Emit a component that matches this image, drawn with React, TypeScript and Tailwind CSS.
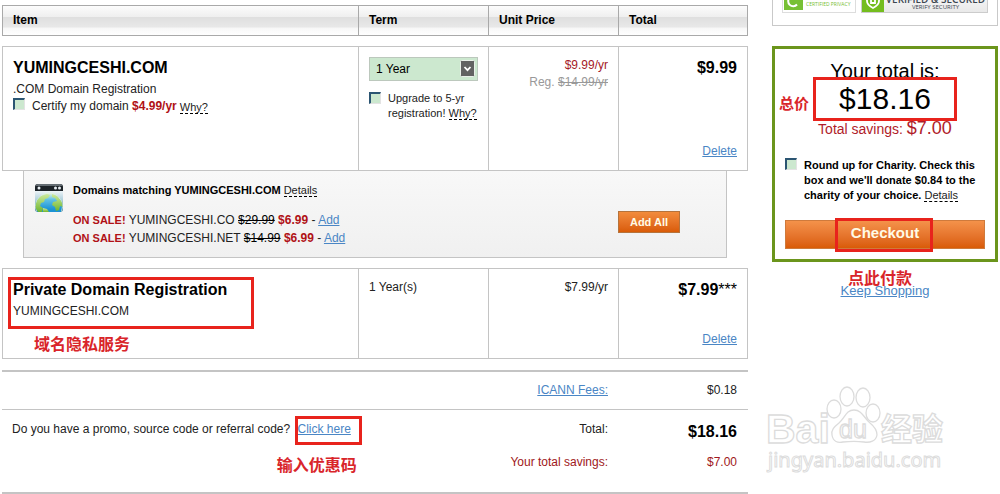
import type { ReactNode } from 'react';

const link = 'text-[#4a86c5] underline';
const hint = 'border-b border-dashed border-black text-[11px] leading-[12px] text-[#222]';
const check =
  'm-0 block size-3 shrink-0 appearance-none border-t-2 border-l-2 border-r border-b border-t-[#2b5572] border-l-[#2b5572] border-r-[#e3e3e3] border-b-[#e3e3e3] bg-[#cce8cf] checked:bg-[#4f9a58]';
const note =
  "absolute whitespace-nowrap font-['Liberation_Serif','Noto_Sans_CJK_SC',serif] font-bold leading-4 text-[#d9252a]";
const frame = 'pointer-events-none absolute border-[3px] border-[#e8231c]';
const cell = 'border-y border-l border-[#c4c4c4] px-[10px] pt-[10px] align-top';

function Heading({ children }: { children: ReactNode }) {
  return (
    <th
      scope="col"
      className="h-[31px] border-y border-l border-[#a9a9a9] px-[10px] text-left font-bold text-black last:border-r"
    >
      {children}
    </th>
  );
}

function Gap({ className }: { className: string }) {
  return (
    <tr aria-hidden="true">
      <td colSpan={4} className={className} />
    </tr>
  );
}

function GlobeIcon() {
  return (
    <svg viewBox="0 0 28 28" className="mt-px size-7 shrink-0" aria-hidden="true">
      <defs>
        <linearGradient id="sky" x1="0" y1="0" x2="0" y2="1">
          <stop offset="0.2" stopColor="#f7fafc" />
          <stop offset="0.6" stopColor="#a9cbd8" />
          <stop offset="1" stopColor="#2f618a" />
        </linearGradient>
        <linearGradient id="sea" x1="0" y1="0" x2="0" y2="1">
          <stop offset="0" stopColor="#e9f6e0" />
          <stop offset="0.25" stopColor="#5fc0e4" />
          <stop offset="0.6" stopColor="#1c93d4" />
        </linearGradient>
        <linearGradient id="land" x1="0" y1="0" x2="0" y2="1">
          <stop offset="0" stopColor="#cdea9c" />
          <stop offset="1" stopColor="#6fb52f" />
        </linearGradient>
        <clipPath id="tile">
          <rect width="28" height="28" rx="3" />
        </clipPath>
        <clipPath id="ball">
          <circle cx="14" cy="22.500" r="13.500" />
        </clipPath>
      </defs>
      <g clipPath="url(#tile)">
        <rect width="28" height="28" fill="url(#sky)" />
        <rect width="28" height="7" fill="#1d2328" />
        <rect width="28" height="2" fill="#646c72" />
        <circle cx="4" cy="4" r="1.500" fill="#e8eef2" />
        <circle cx="20.500" cy="4" r="1.500" fill="#e8eef2" />
        <circle cx="24.500" cy="4" r="1.500" fill="#e8eef2" />
        <circle cx="14" cy="22.500" r="13.500" fill="url(#sea)" stroke="#e3f2dc" strokeWidth="0.800" />
        <g clipPath="url(#ball)" fill="url(#land)">
          <path d="M0 23 2 16l4-4 6-2 3 1-2 3-3 1-1 3-3 1-1 3 3 2-1 4-4 0z" />
          <path d="m17 10 5 2 5 6 1 5-3-1-1 4-3 1-1-4-3-2 1-3 4-1-2-3-3-1z" />
          <path d="m8 24 4 1 2 3-6 0z" />
        </g>
      </g>
    </svg>
  );
}

const deals = [
  { name: 'YUMINGCESHI.CO', was: '$29.99' },
  { name: 'YUMINGCESHI.NET', was: '$14.99' },
];

function Matching() {
  return (
    <div className="mx-[21px] flex h-[87px] items-start border-x border-b border-[#c4c4c4] bg-linear-to-b from-[#f8f8f8] to-[#f0f0f0] pt-3 pr-[46px] pl-[11px]">
      <GlobeIcon />
      <div className="ml-[10px] flex-1">
        <div className="mb-[14px] text-[11px] leading-[14px]">
          <b className="text-black">Domains matching YUMINGCESHI.COM</b>{' '}
          <a href="#details" className={hint}>Details</a>
        </div>
        {deals.map((d) => (
          <div key={d.name} className="leading-[18px]">
            <b className="text-[11px] text-[#b01116]">ON SALE!</b> {d.name} <s className="text-black">{d.was}</s>{' '}
            <b className="text-[#b01116]">$6.99</b> - <a href="#add" className={link}>Add</a>
          </div>
        ))}
      </div>
      <button
        type="button"
        className="mt-7 h-[22px] w-[62px] border border-[#b5733c] bg-linear-to-b from-[#f28c3c] to-[#d95b05] text-[11px] font-bold text-[#fffbe6]"
      >
        Add All
      </button>
    </div>
  );
}

function Cart() {
  return (
    <table className="w-full table-fixed border-separate border-spacing-0">
      <colgroup>
        <col />
        <col className="w-[130px]" />
        <col className="w-[130px]" />
        <col className="w-[130px]" />
      </colgroup>
      <thead>
        <tr className="bg-[linear-gradient(to_bottom,#fdfdfd_0%,#efefef_38%,#dfdfdf_40%,#e8e8e8_70%,#f8f8f8_76%,#ffffff_100%)]">
          <Heading>Item</Heading>
          <Heading>Term</Heading>
          <Heading>Unit Price</Heading>
          <Heading>Total</Heading>
        </tr>
      </thead>
      <tbody>
        <Gap className="h-[10px]" />
        <tr className="h-[125px]">
          <td className={cell}>
            <h2 className="mb-[2px] text-base leading-[22px] font-bold text-black">YUMINGCESHI.COM</h2>
            <div>.COM Domain Registration</div>
            <div className="flex items-start">
              <input id="certify" type="checkbox" className={check} />
              <label htmlFor="certify" className="mr-[3px] ml-[7px]">
                Certify my domain <b className="text-[#b01116]">$4.99/yr</b>
              </label>
              <a href="#why-certify" className={`${hint} mt-[3px]`}>Why?</a>
            </div>
          </td>
          <td className={cell}>
            <div className="relative">
              <select
                aria-label="Term"
                className="block h-6 w-full appearance-none rounded-none border border-[#bcc8bd] bg-[#cce8cf] pr-5 pl-[6px] text-[12px] text-black"
              >
                <option>1 Year</option>
                <option>2 Years</option>
                <option>5 Years</option>
              </select>
              <svg viewBox="0 0 15 17" className="pointer-events-none absolute top-[3px] right-[3px] h-[17px] w-[15px]" aria-hidden="true">
                <rect x="0.500" y="0.500" width="14" height="16" rx="1" fill="#626262" stroke="#e9efe9" />
                <path d="m4.500 7 3 3.200 3-3.200" fill="none" stroke="#fff" strokeWidth="1.800" />
              </svg>
            </div>
            <div className="mt-[10px] flex items-start text-[11px] leading-[15px]">
              <input id="upgrade" type="checkbox" className={`${check} mt-px`} />
              <div className="ml-[7px] whitespace-nowrap">
                <label htmlFor="upgrade">
                  Upgrade to 5-yr
                  <br />
                  registration!
                </label>{' '}
                <a href="#why-upgrade" className={hint}>Why?</a>
              </div>
            </div>
          </td>
          <td className={`${cell} text-right`}>
            <div className="text-[#a52028]">$9.99/yr</div>
            <div className="text-[#999]">Reg. <s>$14.99/yr</s></div>
          </td>
          <td className={`${cell} border-r text-right`}>
            <div className="flex h-[103px] flex-col justify-between">
              <b className="text-base leading-[22px] text-black">$9.99</b>
              <a href="#delete-domain" className={link}>Delete</a>
            </div>
          </td>
        </tr>
        <tr>
          <td colSpan={4}>
            <Matching />
          </td>
        </tr>
        <Gap className="h-[10px]" />
        <tr className="h-[91px]">
          <td className={`${cell} relative`}>
            <h2 className="mb-[2px] text-base leading-[22px] font-bold text-black">Private Domain Registration</h2>
            <div>YUMINGCESHI.COM</div>
            <span className={`${frame} top-2 left-[5px] h-[52px] w-[246px]`} />
            <span className={`${note} top-[68px] left-[31px] text-[16px]`}>域名隐私服务</span>
          </td>
          <td className={cell}>1 Year(s)</td>
          <td className={`${cell} text-right`}>$7.99/yr</td>
          <td className={`${cell} border-r text-right`}>
            <div className="flex h-[69px] flex-col justify-between">
              <b className="text-base leading-[22px] text-black">$7.99<span className="font-normal">***</span></b>
              <a href="#delete-privacy" className={link}>Delete</a>
            </div>
          </td>
        </tr>
        <Gap className="h-[11px]" />
      </tbody>
      <tfoot>
        <tr className="h-[39px]">
          <td colSpan={2} className="border-t-2 border-[#c4c4c4]" />
          <td className="border-t-2 border-[#c4c4c4] pr-[10px] text-right">
            <a href="#icann" className={link}>ICANN Fees:</a>
          </td>
          <td className="border-t-2 border-[#c4c4c4] pr-[11px] text-right">$0.18</td>
        </tr>
        <tr className="h-[43px] align-top">
          <td colSpan={2} className="border-t border-[#c4c4c4] pt-[11px] pl-[10px]">
            Do you have a promo, source code or referral code?{' '}
            <span className="relative ml-1 inline-block">
              <a href="#promo" className={link}>Click here</a>
              <span className={`${frame} -top-[5px] -right-[11px] -left-[3px] h-[29px]`} />
              <span className={`${note} top-[37px] right-[-6px] text-[16px]`}>输入优惠码</span>
            </span>
          </td>
          <td className="border-t border-[#c4c4c4] pt-[11px] pr-[10px] text-right">Total:</td>
          <td className="border-t border-[#c4c4c4] pt-[11px] pr-[11px] text-right text-base leading-[22px] font-bold text-black">
            $18.16
          </td>
        </tr>
        <tr className="h-[42px] align-top text-[#a01820]">
          <td colSpan={2} className="border-b-2 border-[#c4c4c4]" />
          <td className="border-b-2 border-[#c4c4c4] pt-[2px] pr-[10px] text-right">Your total savings:</td>
          <td className="border-b-2 border-[#c4c4c4] pt-[2px] pr-[11px] text-right">$7.00</td>
        </tr>
      </tfoot>
    </table>
  );
}

function Badges() {
  return (
    <div className="flex h-[26px] items-end justify-between overflow-hidden border-x border-b border-[#c9c9c9] px-[9px] pb-[12px] font-['Open_Sans',sans-serif]">
      <div className="flex h-7 w-[74px] shrink-0 items-end border border-[#ddd]">
        <svg viewBox="0 0 20 26" className="h-[26px] w-5 shrink-0" aria-hidden="true">
          <rect width="19" height="24" x="1" fill="#77c034" />
          <path d="M14 12a5 5 0 1 0 0 6.500" fill="none" stroke="#fff" strokeWidth="2" />
        </svg>
        <span className="ml-[3px] pb-[4px] text-[5px] leading-[7px] whitespace-nowrap text-[#77c034]">CERTIFIED PRIVACY</span>
      </div>
      <div className="flex h-7 w-[127px] shrink-0 items-end border border-[#ccc] bg-linear-to-b from-white to-[#e9e9e9]">
        <svg viewBox="0 0 22 26" className="h-[26px] w-[22px] shrink-0" aria-hidden="true">
          <rect width="22" height="26" fill="#74bd1e" />
          <path d="M5 9v6q0 4 6 7 6-3 6-7V9M9 11v6h4v-6" fill="none" stroke="#fff" strokeWidth="1.800" />
        </svg>
        <div className="flex-1 pb-px text-center whitespace-nowrap text-[#3c4650]">
          <div className="text-[10px] leading-[10px] font-semibold">VERIFIED &amp; SECURED</div>
          <div className="text-[6px] leading-[7px]">VERIFY SECURITY</div>
        </div>
      </div>
    </div>
  );
}

function Watermark() {
  return (
    <svg viewBox="0 0 186 92" className="pointer-events-none absolute top-[384px] right-[48px] h-[92px] w-[186px]" aria-hidden="true">
      <g fill="#fff" stroke="#dcdcdc" strokeWidth="1.300">
        <text x="0" y="59" fontFamily="Liberation Sans, sans-serif" fontWeight="700" fontSize="41">Bai</text>
        <ellipse cx="68" cy="25" rx="7" ry="9" />
        <ellipse cx="81" cy="12.500" rx="7" ry="9.500" />
        <ellipse cx="97" cy="13.500" rx="7" ry="9.500" />
        <ellipse cx="107" cy="29" rx="7" ry="9" />
        <path d="M88 26c-8 0-9 8-15 13-5 4-8 7-7 12 1 7 6 8 11 7 8-1 14-1 21 0 6 1 12-1 13-7 0-5-2-8-7-12-6-5-8-13-16-13Z" />
        <text x="73" y="54" fontFamily="Liberation Sans, sans-serif" fontSize="25">du</text>
        <text x="115" y="56" fontFamily="Noto Sans CJK SC, sans-serif" fontWeight="700" fontSize="31">经验</text>
        <text x="2" y="83" fontFamily="Noto Sans, sans-serif" fontSize="20" strokeWidth="1">jingyan.baidu.com</text>
      </g>
    </svg>
  );
}

function Summary() {
  return (
    <aside className="w-[226px] shrink-0">
      <Badges />
      <section className="relative mt-5 border-[3px] border-[#6b951c] px-[10px] py-[10px] text-center text-black">
        <div className="text-[20px] leading-6">Your total is:</div>
        <div className="relative text-[30px] leading-8">
          $18.16
          <span className={`${frame} -top-[6px] right-[28px] left-[28px] h-[44px]`} />
          <span className={`${note} top-[13px] -left-[6px] text-[15px]`}>总价</span>
        </div>
        <div className="text-[14px] leading-[26px] text-[#b01c2a]">
          Total savings: <span className="text-[18px]">$7.00</span>
        </div>
        <div className="mt-4 flex items-start text-left text-[11px] leading-[15px] font-bold">
          <input id="charity" type="checkbox" className={check} />
          <div className="ml-[7px]">
            <label htmlFor="charity">
              Round up for Charity. Check this box and we'll donate $0.84 to the charity of your choice.
            </label>{' '}
            <a href="#charity" className={`${hint} font-normal`}>Details</a>
          </div>
        </div>
        <button
          type="button"
          className="relative mt-[17px] block h-[29px] w-full border border-[#cf7a3c] bg-linear-to-b from-[#f4924a] to-[#d95b05] pb-[3px] text-[15px] leading-5 font-bold text-[#fffbe6]"
        >
          Checkout
          <span className={`${frame} -top-[3px] left-[49px] h-[34px] w-[98px]`} />
        </button>
      </section>
      <div className="relative mt-5 text-center text-[13px] leading-[18px]">
        <a href="#shop" className={link}>Keep Shopping</a>
        <span className={`${note} -top-[11px] left-[76px] text-[16px]`}>点此付款</span>
      </div>
    </aside>
  );
}

export default function App() {
  return (
    <div className="relative flex items-start gap-6 bg-white px-[2px] font-['Liberation_Sans','Noto_Sans_CJK_SC',sans-serif] text-[12px] leading-[17px] text-[#222]">
      <main className="min-w-0 flex-1 pt-[5px]">
        <Cart />
      </main>
      <Summary />
      <Watermark />
    </div>
  );
}
